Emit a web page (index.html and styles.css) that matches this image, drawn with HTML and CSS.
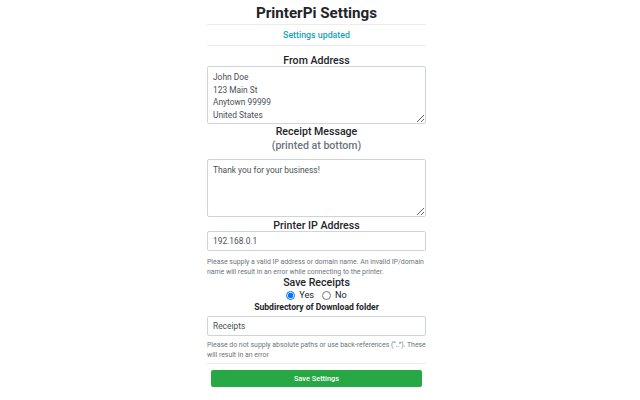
FILE: index.html
```html
<!DOCTYPE html>
<html>
<head>
<meta charset="utf-8">
<link rel="stylesheet" href="styles.css">
</head>
<body>
<div class="page">
  <h1 class="title">PrinterPi Settings</h1>
  <hr class="rule">
  <div class="status">Settings updated</div>
  <hr class="rule">
  <form class="form">
    <label class="label label-from">From Address</label>
    <textarea class="field area">John Doe
123 Main St
Anytown 99999
United States</textarea>
    <label class="label label-receipt">Receipt Message<br><span class="sub">(printed at bottom)</span></label>
    <textarea class="field area area-msg">Thank you for your business!</textarea>
    <label class="label label-ip">Printer IP Address</label>
    <input class="field input" type="text" value="192.168.0.1">
    <p class="help help-ip">Please supply a valid IP address or domain name. An invalid IP/domain name will result in an error while connecting to the printer.</p>
    <label class="label label-save">Save Receipts</label>
    <div class="radios">
      <label class="radio"><input type="radio" name="save" checked> Yes</label>
      <label class="radio"><input type="radio" name="save"> No</label>
    </div>
    <label class="label label-sub">Subdirectory of Download folder</label>
    <input class="field input" type="text" value="Receipts">
    <p class="help help-dir">Please do not supply absolute paths or use back-references (“..”). These will result in an error</p>
    <hr class="rule rule-bottom">
    <button type="button" class="btn">Save Settings</button>
  </form>
</div>
</body>
</html>
```
FILE: styles.css
```css
* { box-sizing: border-box; }
body {
  margin: 0;
  padding-right: 7px;
  background: #fff;
  font-family: Roboto, "Open Sans", sans-serif;
  color: #212529;
}
.page {
  width: 219px;
  margin: 0 auto;
}
.title {
  margin: 0;
  height: 24px;
  line-height: 26px;
  font-size: 15.2px;
  font-weight: 700;
  text-align: center;
}
.rule {
  margin: 0;
  border: 0;
  border-top: 1px solid #ececec;
  height: 0;
}
.status {
  height: 20px;
  line-height: 20px;
  text-align: center;
  font-size: 8.8px;
  font-weight: 500;
  color: #17a2b8;
}
.form { display: flex; flex-direction: column; }
.label {
  display: block;
  text-align: center;
  font-size: 10.6px;
  font-weight: 500;
  line-height: 14px;
}
.label-from { height: 20px; line-height: 30px; }
.label-receipt { height: 35px; padding-top: 1px; }
.label-receipt .sub { color: #6c757d; }
.label-ip { height: 14px; line-height: 18px; }
.label-save { height: 11px; line-height: 12px; font-size: 10.6px; }
.label-sub { height: 14px; font-size: 8.6px; line-height: 10px; font-weight: 700; }
.field {
  display: block;
  width: 100%;
  border: 1px solid #ced4da;
  border-radius: 2px;
  font-family: Roboto, "Open Sans", sans-serif;
  font-size: 8.4px;
  color: #495057;
  background: #fff;
}
.area {
  height: 58px;
  padding: 4px 5px 2px;
  line-height: 12.6px;
  resize: vertical;
}
.input {
  height: 20px;
  padding: 0 5px;
}
.help {
  margin: 0;
  font-size: 6.9px;
  line-height: 10px;
  color: #6c757d;
}
.help-ip { padding-top: 6px; height: 26px; }
.help-dir { padding-top: 4px; height: 27px; }
.radios {
  display: flex;
  justify-content: center;
  gap: 8px;
  height: 14px;
  font-size: 9.2px;
  line-height: 14px;
}
.radio {
  display: flex;
  align-items: center;
  gap: 4px;
}
.radio input {
  margin: 0;
  width: 9px;
  height: 9px;
  accent-color: #0075ff;
}
.rule-bottom { margin-bottom: 6px; }
.btn {
  margin: 0 4px;
  height: 17px;
  border: 0;
  border-radius: 2px;
  background: #28a745;
  color: #fff;
  font-family: Roboto, "Open Sans", sans-serif;
  font-size: 7.4px;
  font-weight: 500;
  padding: 0;
}
```
